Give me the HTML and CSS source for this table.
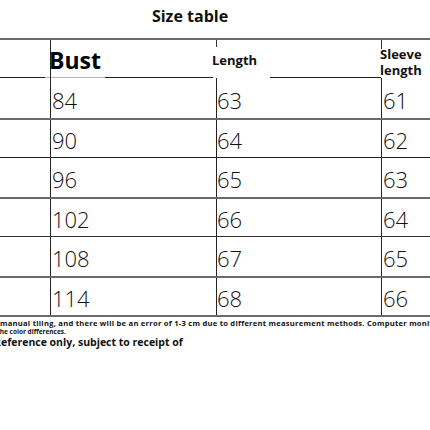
FILE: index.html
```html
<!DOCTYPE html>
<html lang="en">
<head>
<meta charset="utf-8">
<title>Size table</title>
<link rel="stylesheet" href="styles.css">
</head>
<body>
<div class="page">
  <div class="title">Size table</div>
  <div class="table">
    <div class="row head">
      <div class="c c0"></div>
      <div class="c c1"><span class="bust">Bust</span></div>
      <div class="c c2"><span class="len">Length</span></div>
      <div class="c c3"><span class="slv">Sleeve<br>length</span></div>
    </div>
    <div class="row r1"><div class="c c0"></div><div class="c c1">84</div><div class="c c2">63</div><div class="c c3">61</div></div>
    <div class="row r2"><div class="c c0"></div><div class="c c1">90</div><div class="c c2">64</div><div class="c c3">62</div></div>
    <div class="row r3"><div class="c c0"></div><div class="c c1">96</div><div class="c c2">65</div><div class="c c3">63</div></div>
    <div class="row r4"><div class="c c0"></div><div class="c c1">102</div><div class="c c2">66</div><div class="c c3">64</div></div>
    <div class="row r5"><div class="c c0"></div><div class="c c1">108</div><div class="c c2">67</div><div class="c c3">65</div></div>
    <div class="row r6"><div class="c c0"></div><div class="c c1">114</div><div class="c c2">68</div><div class="c c3">66</div></div>
  </div>
  <div class="notes">
    <div class="n1">manual tiling, and there will be an error of 1-3 cm due to different measurement methods. Computer monitors</div>
    <div class="n2">The color differences.</div>
    <div class="n3">Reference only, subject to receipt of</div>
  </div>
</div>
</body>
</html>
```
FILE: styles.css
```css
html, body {
  margin: 0;
  padding: 0;
  background: #fff;
}
body {
  width: 430px;
  height: 430px;
  overflow: hidden;
  font-family: "Open Sans", "Liberation Sans", sans-serif;
  color: #111;
}
.page {
  width: 430px;
  overflow: hidden;
}
.title {
  height: 38px;
  line-height: 32px;
  font-size: 16px;
  font-weight: 700;
  text-align: center;
  padding-right: 50px;
  box-sizing: border-box;
}
.table {
  width: 430px;
}
.row {
  display: grid;
  grid-template-columns: 50px 166px 165px 49px;
  box-sizing: border-box;
  height: 40px;
}
.row.head {
  border-top: 2px solid #6a6a6a;
  background:
    linear-gradient(#222, #222) 0 100% / 45px 1px no-repeat,
    linear-gradient(#b5b5b5, #b5b5b5) 45px 100% / 60px 1px no-repeat,
    linear-gradient(#222, #222) 105px 100% / 108px 1px no-repeat,
    linear-gradient(#222, #222) 270px 100% / 111px 1px no-repeat;
}
.r1 { height: 40px; }
.r2 { height: 39px; border-top: 2px solid #6a6a6a; }
.r3 { height: 40px; border-top: 1px solid #222; }
.r4 { height: 39px; border-top: 2px solid #6a6a6a; }
.r5 { height: 40px; border-top: 1px solid #333; }
.r6 { height: 41px; border-top: 2px solid #6a6a6a; border-bottom: 2px solid #6a6a6a; }

.c {
  display: flex;
  align-items: center;
  box-sizing: border-box;
  font-size: 22px;
  font-weight: 300;
  line-height: 1;
  padding-top: 3px;
  white-space: nowrap;
}
.c1 { border-left: 1px solid #222; padding-left: 1px; }
.c2 { border-left: 1px solid #222; padding-left: 0; }
.c3 { border-left: 1px solid #222; padding-left: 1px; }

.head .c { padding-top: 0; }
.head .c2 {
  border-left: none;
  background: linear-gradient(#333, #333) 0 0 / 1px 7px no-repeat;
}
.head .c3 {
  border-left: none;
  align-items: flex-start;
  background: linear-gradient(#333, #333) 0 0 / 1px 9px no-repeat;
}
.bust {
  font-size: 23px;
  font-weight: 700;
  margin-left: -3px;
  margin-top: 3px;
  color: #000;
}
.len {
  font-size: 13px;
  font-weight: 700;
  margin-left: -4px;
  margin-top: 3px;
}
.slv {
  font-size: 13px;
  font-weight: 700;
  line-height: 16px;
  margin-left: -2px;
  margin-top: 6px;
}

.notes {
  padding-top: 2px;
  font-weight: 700;
  white-space: nowrap;
}
.n1 {
  font-size: 7.6px;
  line-height: 9px;
  letter-spacing: 0.25px;
}
.n2 {
  font-size: 6.5px;
  line-height: 8px;
  margin-left: -4px;
}
.n3 {
  font-size: 10.5px;
  font-weight: 700;
  line-height: 13px;
  margin-left: -6px;
}
```
